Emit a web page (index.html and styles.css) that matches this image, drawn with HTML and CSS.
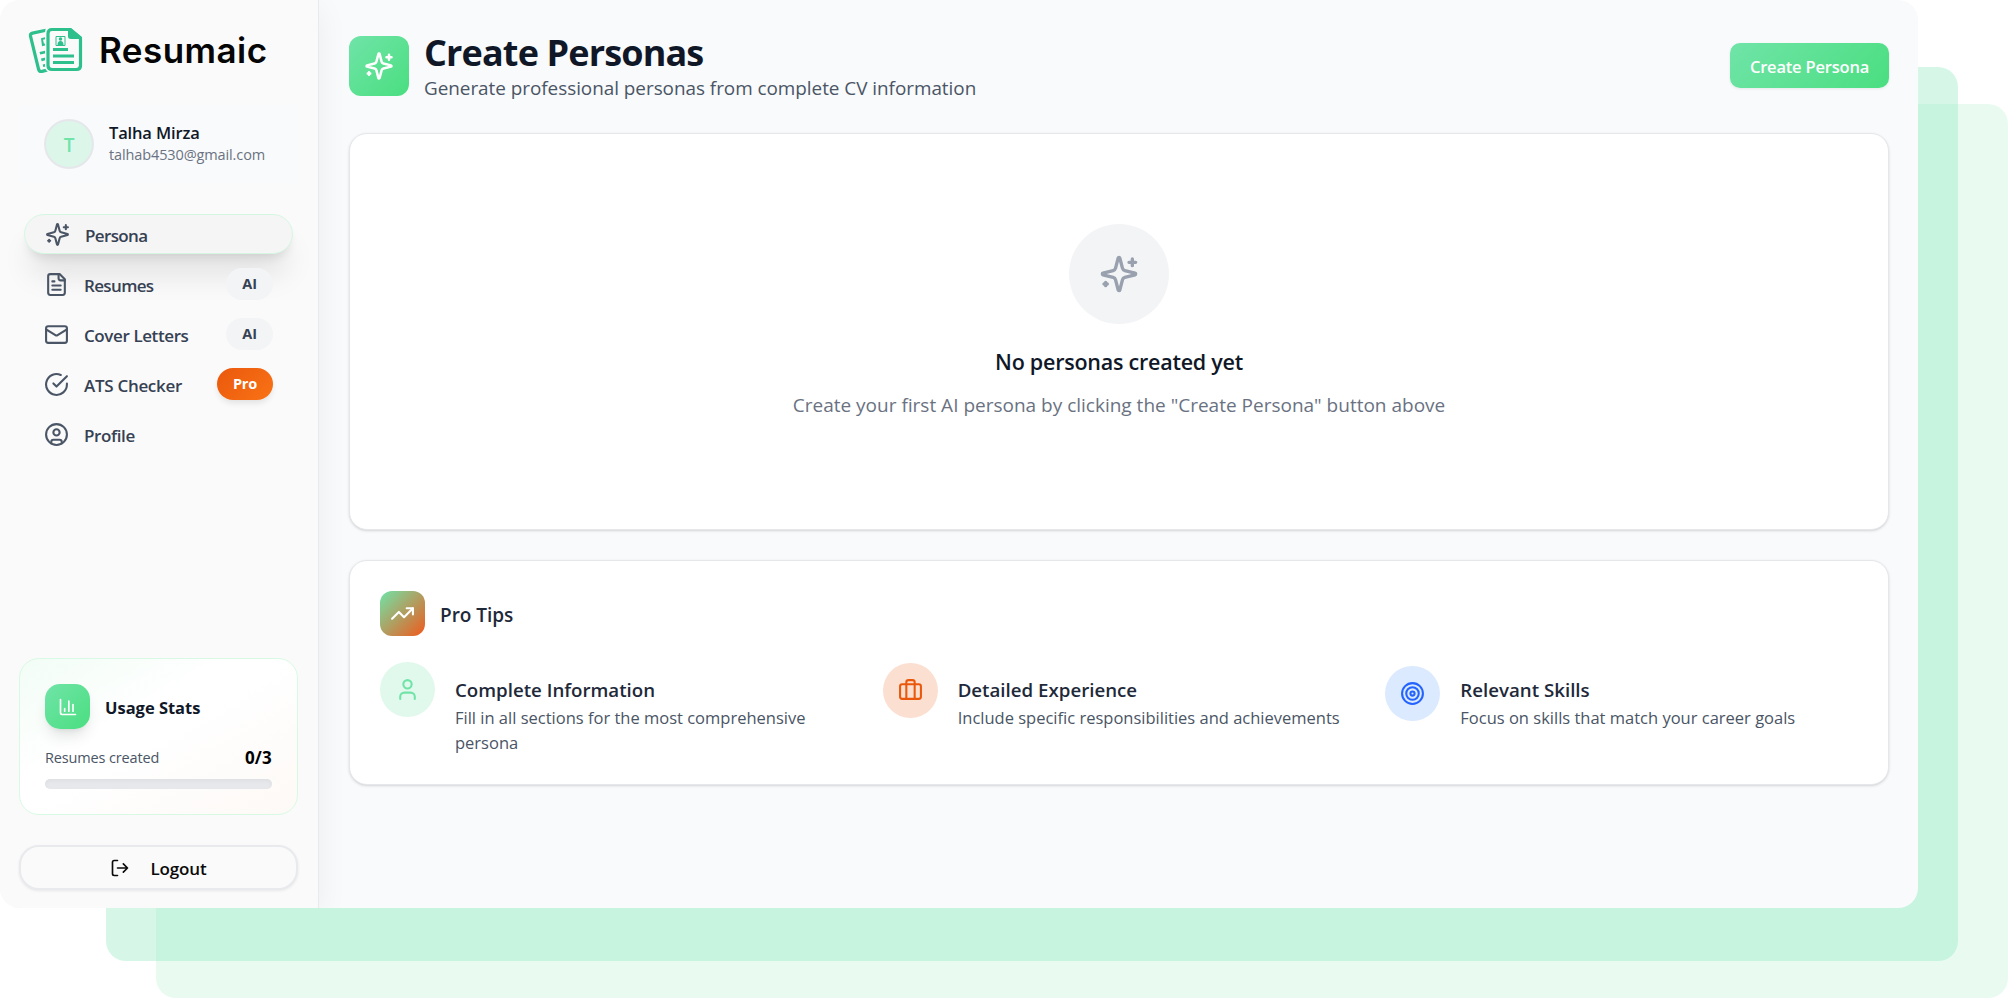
FILE: index.html
```
<!DOCTYPE html>
<html lang="en">
<head>
    <meta charset="UTF-8">
    <meta name="viewport" content="width=device-width, initial-scale=1.0">
    <title>Resumaic - Create Personas</title>
    <link rel="stylesheet" href="styles.css">
</head>
<body>
    <!-- shared icon symbols -->
    <svg class="sprite" width="0" height="0">
        <symbol id="sparkles" viewBox="0 0 24 24">
            <path d="M9.937 15.500A2 2 0 0 0 8.500 14.063l-6.135-1.582a.5.5 0 0 1 0-.962L8.500 9.936A2 2 0 0 0 9.937 8.500l1.582-6.135a.5.5 0 0 1 .963 0L14.063 8.500A2 2 0 0 0 15.500 9.937l6.135 1.581a.5.5 0 0 1 0 .964L15.500 14.063a2 2 0 0 0-1.437 1.437l-1.582 6.135a.5.5 0 0 1-.963 0z"/>
            <path d="M20 3v4M22 5h-4M4 17v2M5 18H3"/>
        </symbol>
    </svg>

    <div class="stage">
        <div class="layer layer-back"></div>
        <div class="layer layer-mid"></div>

        <div class="app">
            <aside class="sidebar">
                <div class="logo">
                    <svg class="logo-mark" viewBox="0 0 56 48">
                        <path class="sheet" d="M18 3.2 4.500 6.100Q2 6.800 2.500 9.200L10.500 42Q11.300 45 14 44.400L19.500 43"/>
                        <path class="bars" d="M13 11.300l5-1.300v2l-3 .8 1 4 2-.5v2l-4 1zM11.500 25l5.500-1.300v2.800l-4.700 1.100zM13 31.500l4.500-1.100v2.800l-3.900 1zM14.700 37.500l3.300-.7v2.700l-2.700.6z"/>
                        <path class="gap" d="M24 2H42L53 11V38.500Q53 42.500 49 42.500H24Q20 42.500 20 38.500V6Q20 2 24 2Z"/>
                        <path class="sheet" d="M24 2.500H42L52.500 11.500V38.500Q52.500 42.500 48.500 42.500H24Q20 42.500 20 38.500V6.500Q20 2.500 24 2.500Z"/>
                        <path class="fold" d="M40 1V9.500Q40 12 43 12H54V10L43 1Z"/>
                        <path class="bars" d="M25 21h15v3H25zM25 27.500h21v3H25zM25 34h21v3H25z"/>
                        <path class="photo" d="M28 9.500h9v9h-9z"/>
                        <path class="bars" d="M29.500 18q0-4 3-4t3 4zM30.700 12a1.800 1.800 0 1 1 3.600 0 1.800 1.800 0 1 1-3.600 0z"/>
                    </svg>
                    <span class="logo-text">Resumaic</span>
                </div>

                <div class="user">
                    <div class="avatar">T</div>
                    <div class="user-info">
                        <div class="user-name">Talha Mirza</div>
                        <div class="user-mail">talhab4530@gmail.com</div>
                    </div>
                </div>

                <nav class="nav">
                    <a class="nav-item active">
                        <svg class="icon" viewBox="0 0 24 24"><use href="#sparkles"/></svg>
                        <span class="nav-persona">Persona</span>
                    </a>
                    <a class="nav-item">
                        <svg class="icon" viewBox="0 0 24 24"><path d="M15 2H6a2 2 0 0 0-2 2v16a2 2 0 0 0 2 2h12a2 2 0 0 0 2-2V7Z"/><path d="M14 2v4a2 2 0 0 0 2 2h4M10 9H8M16 13H8M16 17H8"/></svg>
                        <span class="nav-resumes">Resumes</span>
                        <em class="badge">AI</em>
                    </a>
                    <a class="nav-item">
                        <svg class="icon" viewBox="0 0 24 24"><rect x="2" y="4" width="20" height="16" rx="2"/><path d="m22 7-8.970 5.700a1.940 1.940 0 0 1-2.060 0L2 7"/></svg>
                        <span>Cover Letters</span>
                        <em class="badge">AI</em>
                    </a>
                    <a class="nav-item">
                        <svg class="icon" viewBox="0 0 24 24"><path d="M22 11.080V12a10 10 0 1 1-5.930-9.140"/><path d="m9 11 3 3L22 4"/></svg>
                        <span class="nav-ats">ATS Checker</span>
                        <em class="badge badge-pro">Pro</em>
                    </a>
                    <a class="nav-item">
                        <svg class="icon" viewBox="0 0 24 24"><circle cx="12" cy="12" r="10"/><circle cx="12" cy="10" r="3"/><path d="M7 20.662V19a2 2 0 0 1 2-2h6a2 2 0 0 1 2 2v1.662"/></svg>
                        <span>Profile</span>
                    </a>
                </nav>

                <div class="usage">
                    <div class="usage-head">
                        <div class="usage-icon">
                            <svg class="icon" viewBox="0 0 24 24"><path d="M3 3v16a2 2 0 0 0 2 2h16M18 17V9M13 17V5M8 17v-3"/></svg>
                        </div>
                        <span class="usage-title">Usage Stats</span>
                    </div>
                    <div class="usage-row">
                        <span class="usage-label">Resumes created</span>
                        <span class="usage-count">0/3</span>
                    </div>
                    <div class="progress"></div>
                </div>

                <button class="logout">
                    <svg class="icon" viewBox="0 0 24 24"><path d="M9 21H5a2 2 0 0 1-2-2V5a2 2 0 0 1 2-2h4M16 17l5-5-5-5M21 12H9"/></svg>
                    <span>Logout</span>
                </button>
            </aside>

            <main class="main">
                <header class="header">
                    <div class="header-icon">
                        <svg class="icon" viewBox="0 0 24 24"><use href="#sparkles"/></svg>
                    </div>
                    <div class="header-text">
                        <h1>Create Personas</h1>
                        <p>Generate professional personas from complete CV information</p>
                    </div>
                    <button class="create-btn">Create Persona</button>
                </header>

                <section class="card empty">
                    <div class="empty-icon">
                        <svg class="icon" viewBox="0 0 24 24"><use href="#sparkles"/></svg>
                    </div>
                    <h2>No personas created yet</h2>
                    <p>Create your first AI persona by clicking the "Create Persona" button above</p>
                </section>

                <section class="card tips">
                    <div class="tips-head">
                        <div class="tips-icon">
                            <svg class="icon" viewBox="0 0 24 24"><path d="M16 7h6v6"/><path d="m22 7-8.500 8.500-5-5L2 17"/></svg>
                        </div>
                        <h3>Pro Tips</h3>
                    </div>
                    <div class="tips-grid">
                        <div class="tip">
                            <div class="tip-icon green">
                                <svg class="icon" viewBox="0 0 24 24"><path d="M19 21v-2a4 4 0 0 0-4-4H9a4 4 0 0 0-4 4v2"/><circle cx="12" cy="7" r="4"/></svg>
                            </div>
                            <div class="tip-text">
                                <h4>Complete Information</h4>
                                <p>Fill in all sections for the most comprehensive persona</p>
                            </div>
                        </div>
                        <div class="tip">
                            <div class="tip-icon orange">
                                <svg class="icon" viewBox="0 0 24 24"><rect x="2" y="6" width="20" height="14" rx="2"/><path d="M16 20V4a2 2 0 0 0-2-2h-4a2 2 0 0 0-2 2v16"/></svg>
                            </div>
                            <div class="tip-text">
                                <h4>Detailed Experience</h4>
                                <p>Include specific responsibilities and achievements</p>
                            </div>
                        </div>
                        <div class="tip">
                            <div class="tip-icon blue">
                                <svg class="icon" viewBox="0 0 24 24"><circle cx="12" cy="12" r="10"/><circle cx="12" cy="12" r="6"/><circle cx="12" cy="12" r="2"/></svg>
                            </div>
                            <div class="tip-text">
                                <h4>Relevant Skills</h4>
                                <p>Focus on skills that match your career goals</p>
                            </div>
                        </div>
                    </div>
                </section>
            </main>
        </div>
    </div>
</body>
</html>
```
FILE: styles.css
```
*, *:before, *:after {
    margin: 0;
    padding: 0;
    box-sizing: border-box;
}
body {
    background: #fff;
    font-family: "Open Sans", "Noto Sans", sans-serif;
    overflow: hidden;
}
button {
    font-family: inherit;
    cursor: pointer;
}
.sprite {
    position: absolute;
}
.icon {
    width: 25px;
    height: 25px;
    flex: none;
    fill: none;
    stroke: currentColor;
    stroke-width: 2;
    stroke-linecap: round;
    stroke-linejoin: round;
}

/* stacked panels behind the app window */
.stage {
    position: relative;
    width: 2008px;
    height: 998px;
}
.layer {
    position: absolute;
    width: 1852px;
    height: 894px;
    border-radius: 20px;
}
.layer-back {
    left: 156px;
    top: 104px;
    background: #e9fbf1;
}
.layer-mid {
    left: 106px;
    top: 67px;
    background: rgba(120, 228, 178, .3);
}
.app {
    position: relative;
    display: flex;
    width: 1918px;
    height: 908px;
    border-radius: 20px;
    overflow: hidden;
    background: #f9fafc;
}

/* sidebar */
.sidebar {
    position: relative;
    display: flex;
    flex-direction: column;
    flex: none;
    width: 319px;
    padding: 27px 20px 18px 19px;
    background: #fafafa;
    border-right: 1px solid #e9eaec;
    box-shadow: 0 8px 30px rgba(0, 0, 0, .06);
}
.logo {
    display: flex;
    align-items: center;
    height: 48px;
    padding-left: 9px;
}
.logo-mark {
    width: 56px;
    height: 48px;
}
.sheet {
    fill: #fafafa;
    stroke: #2dc08d;
    stroke-width: 3.2;
    stroke-linejoin: round;
}
.gap {
    fill: none;
    stroke: #fafafa;
    stroke-width: 6;
}
.bars, .fold {
    fill: #2dc08d;
}
.photo {
    fill: none;
    stroke: #2dc08d;
    stroke-width: 1;
}
.logo-text {
    margin-left: 15px;
    font: 600 35px/48px Inter, sans-serif;
    letter-spacing: .45px;
    color: #050505;
    padding-bottom: 3px;
}
.user {
    display: flex;
    align-items: center;
    gap: 15px;
    margin-top: 30px;
    padding: 14px 25px;
    background: #f9fafb;
}
.user-info {
    padding-bottom: 2px;
}
.avatar {
    width: 50px;
    height: 50px;
    border: 2px solid #e5e7eb;
    border-radius: 50%;
    background: #dcf6ea;
    color: #70e4a8;
    font-size: 19px;
    font-weight: 600;
    line-height: 48px;
    text-align: center;
}
.user-name {
    color: #101828;
    font-size: 16.500px;
    font-weight: 600;
    line-height: 24px;
    letter-spacing: -.15px;
}
.user-mail {
    color: #6a7282;
    font-size: 14.500px;
    line-height: 20px;
    letter-spacing: -.12px;
}
.nav {
    display: flex;
    flex-direction: column;
    gap: 10px;
    margin: 31px 5px 0 5px;
}
.nav-item {
    display: flex;
    align-items: center;
    height: 40px;
    padding: 0 20px;
    border-radius: 20px;
    color: #364153;
    font-size: 17px;
    font-weight: 600;
    line-height: 38px;
    letter-spacing: -.4px;
}
.nav-item .icon {
    margin-right: 15px;
    color: #4a5565;
}
.nav-item span {
    padding-top: 4px;
}
.nav-persona, .nav-resumes {
    letter-spacing: -.65px;
}
.nav-ats {
    letter-spacing: -.3px;
}
.active {
    border: 1px solid #d5f7e2;
    background: #f5f5f5;
    box-shadow: 0 25px 30px -5px rgba(0, 0, 0, .1), 0 8px 12px -6px rgba(0, 0, 0, .14);
}
.badge {
    margin-left: auto;
    padding: 0 16px;
    border-radius: 16px;
    background: #f3f4f6;
    color: #364153;
    font-size: 14.500px;
    font-style: normal;
    font-weight: 700;
    line-height: 32px;
    letter-spacing: 0;
}
.badge-pro {
    background: linear-gradient(135deg, #ea580c, #f97316);
    color: #fff;
    letter-spacing: -.2px;
    box-shadow: 0 4px 6px -1px rgba(0, 0, 0, .1);
}
.usage {
    height: 157px;
    margin-top: auto;
    padding: 25px;
    border: 1px solid #d8fae4;
    border-radius: 20px;
    background: linear-gradient(150deg, #f2fdf6, #fff 40%, #fff 50%, #fdf9f6);
}
.usage-head {
    display: flex;
    align-items: center;
    gap: 15px;
}
.usage-icon {
    display: flex;
    align-items: center;
    justify-content: center;
    width: 45px;
    height: 45px;
    border-radius: 15px;
    background: linear-gradient(135deg, #70e4a8, #4ade80);
    box-shadow: 0 10px 15px -3px rgba(0, 0, 0, .1), 0 4px 6px -4px rgba(0, 0, 0, .1);
    color: #fff;
}
.usage-icon .icon {
    width: 20px;
    height: 20px;
}
.usage-title {
    padding-top: 2px;
    color: #101828;
    font-size: 16.500px;
    font-weight: 700;
    letter-spacing: -.02px;
}
.usage-row {
    display: flex;
    justify-content: space-between;
    margin-top: 17px;
    line-height: 24px;
}
.usage-label {
    color: #4a5565;
    font-size: 14.500px;
    letter-spacing: -.15px;
}
.usage-count {
    color: #000;
    font-size: 17px;
    font-weight: 700;
    letter-spacing: .2px;
}
.progress {
    height: 10px;
    margin-top: 9px;
    border-radius: 5px;
    background: #e7e8ec;
    box-shadow: inset 0 2px 4px rgba(0, 0, 0, .04);
}
.logout {
    display: flex;
    align-items: center;
    justify-content: center;
    gap: 20px;
    height: 45px;
    margin-top: 30px;
    border: 2px solid #e9eaee;
    border-radius: 20px;
    background: #fafafa;
    box-shadow: 0 1px 3px rgba(0, 0, 0, .08);
    color: #0a0a0a;
    font-size: 17px;
    font-weight: 600;
    letter-spacing: -.15px;
}
.logout span {
    padding-top: 2px;
}
.logout .icon {
    width: 20px;
    height: 20px;
}

/* main column */
.main {
    flex: 1;
    padding: 36px 29px 0 30px;
}
.header {
    display: flex;
    align-items: center;
    height: 60px;
}
.header-icon {
    display: flex;
    align-items: center;
    justify-content: center;
    width: 60px;
    height: 60px;
    border-radius: 12px;
    background: linear-gradient(135deg, #70e4a8, #4ade80);
    color: #fff;
}
.header-icon .icon {
    width: 30px;
    height: 30px;
}
.header-text {
    margin-left: 15px;
}
.header h1 {
    padding-top: 5px;
    color: #101828;
    font-size: 36px;
    font-weight: 700;
    line-height: 38px;
    letter-spacing: -.860px;
}
.header p {
    padding-top: 2px;
    color: #4a5565;
    font-size: 18.900px;
    line-height: 29px;
    letter-spacing: -.03px;
}
.create-btn {
    width: 159px;
    height: 45px;
    margin-left: auto;
    margin-top: -1px;
    padding-top: 2px;
    border: 0;
    border-radius: 10px;
    background: linear-gradient(135deg, #70e4a8, #4ade80);
    box-shadow: 0 1px 3px rgba(0, 0, 0, .08);
    color: #fff;
    font-size: 16.500px;
    font-weight: 600;
    letter-spacing: -.2px;
}
.card {
    border: 1px solid #e5e7eb;
    border-radius: 18px;
    background: #fff;
    box-shadow: 0 1px 3px rgba(0, 0, 0, .12), 0 1px 2px -1px rgba(0, 0, 0, .1);
}
.empty {
    height: 397px;
    margin-top: 37px;
    padding-top: 90px;
    text-align: center;
}
.empty-icon {
    display: flex;
    align-items: center;
    justify-content: center;
    width: 100px;
    height: 100px;
    margin: 0 auto;
    border-radius: 50%;
    background: #f3f4f6;
    color: #99a1af;
}
.empty-icon .icon {
    width: 40px;
    height: 40px;
}
.empty h2 {
    margin-top: 20px;
    color: #101828;
    font-size: 21.500px;
    font-weight: 600;
    line-height: 36px;
    letter-spacing: -.240px;
}
.empty p {
    margin-top: 10px;
    color: #6a7282;
    font-size: 19px;
    line-height: 30px;
}
.tips {
    height: 225px;
    margin-top: 30px;
    padding: 30px;
}
.tips-head {
    display: flex;
    align-items: center;
    gap: 15px;
    height: 45px;
}
.tips-icon {
    display: flex;
    align-items: center;
    justify-content: center;
    width: 45px;
    height: 45px;
    border-radius: 12px;
    background: linear-gradient(135deg, #70e4a8, #f0591b);
    color: #fff;
}
.tips h3 {
    padding-top: 2px;
    color: #1e2939;
    font-size: 19px;
    font-weight: 600;
    letter-spacing: -.05px;
}
.tips-grid {
    display: grid;
    grid-template-columns: repeat(3, 1fr);
    column-gap: 30px;
    margin-top: 26px;
}
.tip {
    display: flex;
}
.tip-icon {
    display: flex;
    align-items: center;
    justify-content: center;
    flex: none;
    width: 55px;
    height: 55px;
    margin-right: 20px;
    border-radius: 50%;
}
.green {
    background: #e1f9ec;
    color: #70e4a8;
}
.orange {
    margin-top: 1px;
    background: #fbdfd1;
    color: #ea580c;
}
.blue {
    margin-top: 4px;
    background: #dbeafe;
    color: #2563ff;
}
.tip-text {
    padding-top: 14px;
}
.tip h4 {
    color: #1e2939;
    font-size: 18.700px;
    font-weight: 600;
    line-height: 28px;
    letter-spacing: 0;
}
.tip p {
    padding-top: 1px;
    color: #4a5565;
    font-size: 16.500px;
    line-height: 25px;
}
```
